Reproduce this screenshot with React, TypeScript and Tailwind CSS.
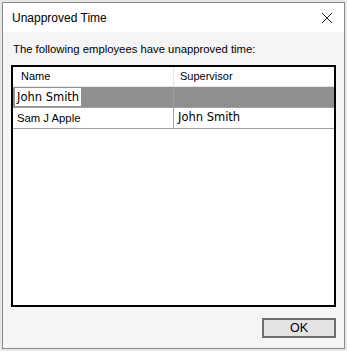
import React from "react";

const ROWS = [
  { name: "John Smith", supervisor: "", selected: true },
  { name: "Sam J Apple", supervisor: "John Smith", selected: false },
];

export default function App() {
  return (
    <div className="h-[351px] w-[347px] bg-[#e8e8e8] p-[2px] font-['Liberation_Sans',Arial,sans-serif] text-[12px] text-black">
      <div className="flex h-[347px] w-[343px] flex-col border border-[#8a8a8a] bg-[#f5f5f5]">
        {/* Title bar */}
        <div className="flex h-[29px] items-center justify-between bg-white pl-[9px] pr-[10px]">
          <span className="text-[12px] leading-none">Unapproved Time</span>
          <svg width="12" height="12" viewBox="0 0 12 12" className="mr-[1px]">
            <path d="M1 1 L11 11 M11 1 L1 11" stroke="#222" strokeWidth="1" />
          </svg>
        </div>

        <div className="flex flex-1 flex-col px-[8px] pt-[10px]">
          <p className="pl-[2px] text-[11.3px] leading-[14px]">
            The following employees have unapproved time:
          </p>

          {/* List view */}
          <div className="mt-[9px] h-[242px] border-2 border-black bg-white">
            <div className="flex h-[20px] border-b border-[#e5e5e5] text-[11px]">
              <div className="w-[161px] border-r border-[#e5e5e5] pl-[8px] leading-[19px]">Name</div>
              <div className="flex-1 pl-[6px] leading-[19px]">Supervisor</div>
            </div>
            {ROWS.map((r) => (
              <div
                key={r.name}
                className={`flex h-[21px] border-b border-[#a0a0a0] ${r.selected ? "bg-[#8f8f8f]" : "bg-white"}`}
              >
                <div className="flex w-[161px] items-center border-r border-[#a0a0a0] pl-[2px]">
                  {r.selected ? (
                    <span className="bg-white px-[2px] font-['DejaVu_Sans',sans-serif] text-[11.5px] leading-[18px]">
                      {r.name}
                    </span>
                  ) : (
                    <span className="pl-[2px] text-[11.3px]">{r.name}</span>
                  )}
                </div>
                <div className="flex flex-1 items-center pl-[4px] font-['DejaVu_Sans',sans-serif] text-[11.5px]">
                  {r.supervisor}
                </div>
              </div>
            ))}
          </div>

          {/* Footer */}
          <div className="flex flex-1 items-start justify-end pt-[11px]">
            <button className="h-[20px] w-[74px] border-2 border-[#6e6e6e] bg-[#e3e3e3] text-[12.5px] leading-none">
              OK
            </button>
          </div>
        </div>
      </div>
    </div>
  );
}
